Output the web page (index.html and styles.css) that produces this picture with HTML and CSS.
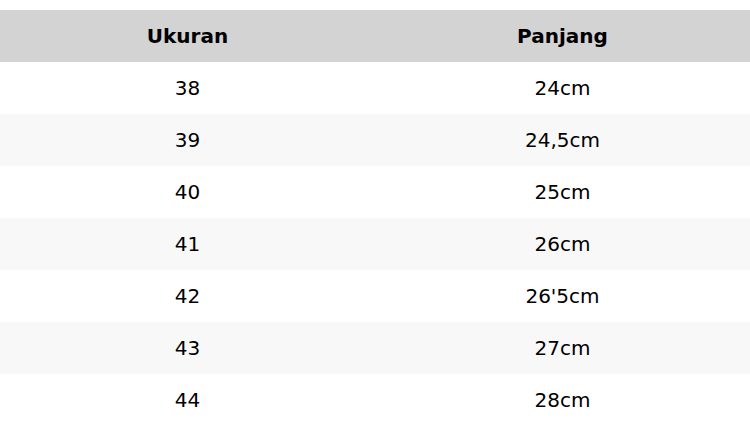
FILE: index.html
```html
<!DOCTYPE html>
<html>
<head>
<meta charset="utf-8">
<link rel="stylesheet" href="styles.css">
</head>
<body>
<table class="size-table">
  <thead>
    <tr><th>Ukuran</th><th>Panjang</th></tr>
  </thead>
  <tbody>
    <tr><td>38</td><td>24cm</td></tr>
    <tr><td>39</td><td>24,5cm</td></tr>
    <tr><td>40</td><td>25cm</td></tr>
    <tr><td>41</td><td>26cm</td></tr>
    <tr><td>42</td><td>26'5cm</td></tr>
    <tr><td>43</td><td>27cm</td></tr>
    <tr><td>44</td><td>28cm</td></tr>
  </tbody>
</table>
</body>
</html>
```
FILE: styles.css
```css
html, body {
  margin: 0;
  padding: 0;
  background: #ffffff;
}
body {
  padding-top: 10px;
  font-family: "DejaVu Sans", sans-serif;
  font-size: 20px;
  color: #000;
}
.size-table {
  width: 750px;
  border-collapse: collapse;
  table-layout: fixed;
}
.size-table th,
.size-table td {
  height: 52px;
  padding: 0;
  text-align: center;
  vertical-align: middle;
}
.size-table th {
  background: #d3d3d3;
  font-weight: bold;
}
.size-table tbody tr:nth-child(even) td {
  background: #f8f8f8;
}
```
